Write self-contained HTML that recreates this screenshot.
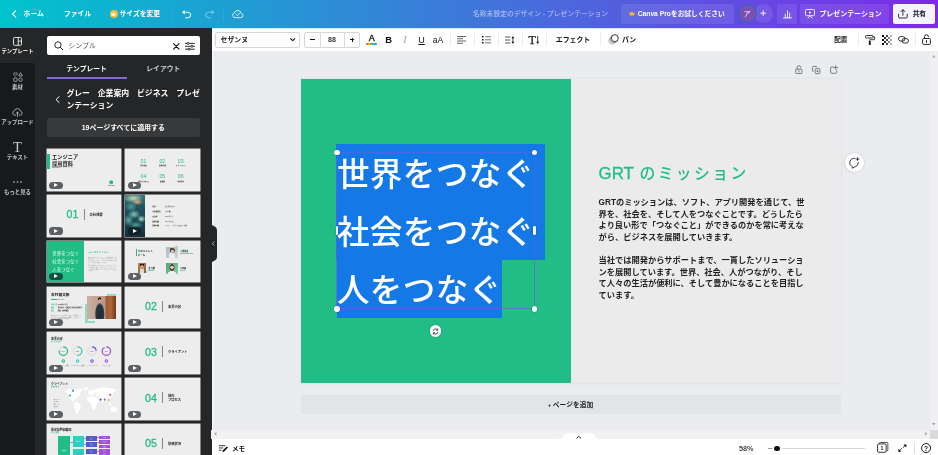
<!DOCTYPE html>
<html lang="ja">
<head>
<meta charset="utf-8">
<title>名称未設定のデザイン - プレゼンテーション</title>
<style>
*{box-sizing:border-box;margin:0;padding:0}
html,body{width:938px;height:455px;overflow:hidden;background:#ebecf0}
body{font-family:"Liberation Sans","Noto Sans CJK JP",sans-serif;position:relative;color:#0e1318;font-size:9px;line-height:1}
#top,#side,#panel,#tool,#canvas,#bottom{will-change:transform}
.abs{position:absolute}
.t{position:absolute;white-space:nowrap;line-height:1}
svg{position:absolute;overflow:visible}
/* top bar */
#top{position:absolute;left:0;top:0;width:938px;height:28px;background:linear-gradient(90deg,#00c4cc,#7d2ae8)}
#top .t{color:#fff;font-weight:700;font-size:6.8px}
/* side */
#side{position:absolute;left:0;top:28px;width:35px;height:427px;background:#18191b}
#side .act{position:absolute;left:0;top:0;width:35px;height:35px;background:#252627}
#side .lb{position:absolute;left:-10px;width:55px;text-align:center;color:#fff;font-size:6px;font-weight:700;white-space:nowrap;line-height:1}
#panel{position:absolute;left:35px;top:28px;width:176.4px;height:427px;background:#252627;overflow:hidden}
.th{position:absolute;width:74.4px;height:41.8px;background:#ededed;overflow:hidden;box-shadow:0 0 0 .45px #f4f4f4}
.pl{position:absolute;left:2.4px;top:32.6px;width:13.4px;height:7.2px;border-radius:3.6px;background:rgba(17,23,29,.66)}
.pl:after{content:"";position:absolute;left:5px;top:1.3px;border-left:4.2px solid #fff;border-top:2.3px solid transparent;border-bottom:2.3px solid transparent}
.hd{position:absolute;width:5.6px;height:5.6px;border-radius:50%;background:#fff;box-shadow:0 0 1.5px rgba(0,0,0,.45)}
.hp{position:absolute;width:2.4px;height:9px;border-radius:1.2px;background:#fff;box-shadow:0 0 1.5px rgba(0,0,0,.45)}
/* toolbar */
#tool{position:absolute;left:211px;top:28px;width:727px;height:23px;background:#fff}
#tool .dv{position:absolute;top:5px;width:1px;height:13px;background:#ebecee}
#bottom{position:absolute;left:211px;top:438px;width:727px;height:17px;background:#fff}
</style>
</head>
<body>
<!-- CANVAS -->
<div id="canvas" class="abs" style="left:211px;top:51px;width:719px;height:379px;background:#ebecf0;overflow:hidden">
<div class="abs" style="left:89.7px;top:27.8px;width:540.2px;height:303.8px;background:#ebebeb;box-shadow:0 0 3px rgba(40,45,60,.09)"></div>
<div class="abs" style="left:89.7px;top:27.8px;width:270.4px;height:303.8px;background:#22bd87"></div>
<div class="abs" style="left:0;top:0;width:.5px;height:379px;background:#252627"></div><div class="abs" style="left:.5px;top:0;width:2.4px;height:379px;background:linear-gradient(90deg,#f7f8fa,#eeeff2)"></div>
<!-- selection -->
<div class="abs" style="left:125.3px;top:92.8px;width:208.6px;height:116px;background:#1478e6"></div>
<div class="abs" style="left:126px;top:207px;width:164.8px;height:60.1px;background:#1478e6"></div>
<div class="abs" style="left:125px;top:101.4px;width:198.6px;height:156.3px;border:1px solid rgba(105,92,235,.68)"></div>
<div class="abs" id="big" style="left:125.9px;top:95.2px;font-size:32.6px;letter-spacing:.4px;line-height:58px;color:#fff;font-weight:500;white-space:nowrap">世界をつなぐ<br>社会をつなぐ<br>人をつなぐ</div>
<div class="hd" style="left:123px;top:98.8px"></div>
<div class="hd" style="left:320.8px;top:98.8px"></div>
<div class="hd" style="left:123px;top:255px"></div>
<div class="hd" style="left:320.8px;top:255px"></div>
<div class="hp" style="left:124.6px;top:174.5px"></div>
<div class="hp" style="left:322.4px;top:174.5px"></div>
<div class="abs" style="left:218.6px;top:274.4px;width:11.6px;height:11.6px;border-radius:50%;background:#fff;box-shadow:0 0 1.5px rgba(0,0,0,.3)"></div>
<svg style="left:220.9px;top:276.7px" width="7" height="7" viewBox="0 0 12 12"><path d="M2 5.2 A4 4 0 0 1 9.3 3.3 M10 6.8 A4 4 0 0 1 2.7 8.7" fill="none" stroke="#0e1318" stroke-width="1.3"/><path d="M9.8 1 V3.8 H7 M2.2 11 V8.2 H5" fill="none" stroke="#0e1318" stroke-width="1.3"/></svg>
<!-- right text -->
<div class="abs" style="left:387.5px;top:112px;font-size:17px;line-height:22px;color:#22bd87;white-space:nowrap;font-weight:400"><span style="font-size:16.9px;-webkit-text-stroke:.3px #22bd87">GRT</span><span style="font-size:15.8px;letter-spacing:2.4px;font-weight:500;margin-left:5.6px">のミッション</span></div>
<div class="abs" id="body" style="left:387.6px;top:146.3px;font-size:8.23px;line-height:11.55px;color:#1f2022;white-space:nowrap;font-weight:700">GRTのミッションは、ソフト、アプリ開発を通じて、世<br>界を、社会を、そして人をつなぐことです。どうしたら<br>より良い形で「つなぐこと」ができるのかを常に考えな<br>がら、ビジネスを展開していきます。<br><br>当社では開発からサポートまで、一貫したソリューショ<br>ンを展開しています。世界、社会、人がつながり、そし<br>て人々の生活が便利に、そして豊かになることを目指し<br>ています。</div>
<!-- comment button -->
<div class="abs" style="left:633.7px;top:102.3px;width:19px;height:19px;border-radius:50%;background:#fff;box-shadow:0 0 2.5px rgba(40,45,60,.22)"></div>
<svg style="left:637.9px;top:105.6px" width="11.5" height="11.5" viewBox="0 0 23 23"><path d="M11.79 2.99 A8.6 8.6 0 0 0 5.96 18.99 L7.16 22.59 L10.30 19.99 A8.6 8.6 0 0 0 18.59 11.10" fill="none" stroke="#0e1318" stroke-width="1.7" stroke-linecap="round" stroke-linejoin="round"/><path d="M17.2 1.4 V7 M14.4 4.2 H20" stroke="#0e1318" stroke-width="1.6" stroke-linecap="round"/></svg>
<!-- slide icons -->
<svg style="left:583.9px;top:14.1px" width="7.6" height="9" viewBox="0 0 15.2 18"><rect x="1.3" y="8.3" width="12.6" height="8.8" rx="1.6" fill="none" stroke="#66686d" stroke-width="1.7"/><path d="M4.2 8 V5.2 a3.6 3.6 0 0 1 7.2 -.4 V5.6" fill="none" stroke="#66686d" stroke-width="1.7" stroke-linecap="round"/><path d="M7.6 10.8 V14" stroke="#66686d" stroke-width="1.7" stroke-linecap="round"/></svg>
<svg style="left:600.9px;top:14.9px" width="8.4" height="8.2" viewBox="0 0 16.8 16.4"><rect x="6.2" y="5.2" width="9.6" height="10.2" rx="1.8" fill="none" stroke="#66686d" stroke-width="1.7"/><path d="M10.4 2.6 a1.7 1.7 0 0 0 -1.7 -1.7 H2.6 a1.7 1.7 0 0 0 -1.7 1.7 V9 a1.7 1.7 0 0 0 1.7 1.7 H3.6" fill="none" stroke="#66686d" stroke-width="1.7"/><path d="M11 8 V12.6 M8.7 10.3 H13.3" stroke="#66686d" stroke-width="1.5"/></svg>
<svg style="left:618.9px;top:14.2px" width="8.6" height="8.8" viewBox="0 0 17.2 17.6"><path d="M6.4 3.8 H3.2 a2 2 0 0 0 -2 2 V14.6 a2 2 0 0 0 2 2 H11.4 a2 2 0 0 0 2 -2 V11.4" fill="none" stroke="#66686d" stroke-width="1.7" stroke-linecap="round"/><path d="M11.4 1.2 V9 M7.5 5.1 H15.3" stroke="#66686d" stroke-width="1.7" stroke-linecap="round"/></svg>
<!-- add page -->
<div class="abs" style="left:89.7px;top:343.9px;width:540px;height:19px;border-radius:2px;background:#e3e4e8"></div>
<div class="abs" style="left:89.7px;top:351px;width:540px;text-align:center;font-size:6.77px;font-weight:700;color:#1f2022;white-space:nowrap"><span style="font-size:5.6px;position:relative;top:-.3px">+</span><span style="margin-left:1.4px">ページを追加</span></div>
</div>
<!-- TOP BAR -->
<div id="top">
<svg style="left:10.5px;top:10px" width="6" height="8" viewBox="0 0 6 8"><path d="M4.8 .8 L1.5 4 L4.8 7.2" fill="none" stroke="#fff" stroke-width="1.1" stroke-linecap="round" stroke-linejoin="round"/></svg>
<span class="t" style="left:23.5px;top:10.7px">ホーム</span>
<span class="t" style="left:64px;top:10.7px">ファイル</span>
<div class="abs" style="left:109.7px;top:9.9px;width:8.1px;height:8.1px;border-radius:50%;background:#fbb930"></div>
<svg style="left:111.3px;top:11.9px" width="4.9" height="4.1" viewBox="0 0 8 7"><path d="M0 1.5 L2.2 3.4 L4 0 L5.8 3.4 L8 1.5 L7.2 6.6 H.8 Z" fill="#fff"/></svg>
<span class="t" style="left:119.5px;top:10.7px">サイズを変更</span>
<div class="abs" style="left:172.2px;top:7px;width:1px;height:14px;background:rgba(255,255,255,.07)"></div>
<svg style="left:182.2px;top:9.5px" width="9.4" height="8.6" viewBox="0 0 18.8 17.2"><path d="M5 4.4 H11.6 a5.6 5.6 0 0 1 0 11.2 H7.2" fill="none" stroke="#fff" stroke-width="2" stroke-linecap="round"/><path d="M0 4.4 L5.6 0 V8.8 Z" fill="#fff"/></svg>
<svg style="left:204.6px;top:9.5px;opacity:.42" width="9.4" height="8.6" viewBox="0 0 18.8 17.2"><path d="M13.8 4.4 H7.2 a5.6 5.6 0 0 0 0 11.2 H11.6" fill="none" stroke="#fff" stroke-width="2" stroke-linecap="round"/><path d="M18.8 4.4 L13.2 0 V8.8 Z" fill="#fff"/></svg>
<div class="abs" style="left:223px;top:7px;width:1px;height:14px;background:rgba(255,255,255,.07)"></div>
<svg style="left:231.6px;top:9px" width="11.6" height="9.2" viewBox="0 0 23.2 18.4"><path d="M6.2 17.4 a5 5 0 0 1 -1.2 -9.8 a7 7 0 0 1 13.5 1.3 a4.3 4.3 0 0 1 -.7 8.5 Z" fill="none" stroke="#fff" stroke-opacity=".88" stroke-width="1.8" stroke-linejoin="round"/><path d="M8.2 10.8 L10.8 13.3 L15.4 8.2" fill="none" stroke="#fff" stroke-opacity=".88" stroke-width="1.8" stroke-linecap="round" stroke-linejoin="round"/></svg>
<span class="t" style="left:473px;top:10.7px;font-weight:400;font-size:6.8px;color:rgba(255,255,255,.62)">名称未設定のデザイン - プレゼンテーション</span>
<div class="abs" style="left:621px;top:4px;width:112.5px;height:19.5px;border-radius:2px;background:rgba(255,255,255,.09)"></div>
<svg style="left:628.7px;top:11.3px" width="5.8" height="4.8" viewBox="0 0 8 7"><path d="M0 1.5 L2.2 3.4 L4 0 L5.8 3.4 L8 1.5 L7.2 6.6 H.8 Z" fill="#fbb930"/></svg>
<span class="t" style="left:637.7px;top:10.7px;font-size:6.72px">Canva Proをお試しください</span>
<div class="abs" style="left:754.3px;top:4.3px;width:18.6px;height:18.6px;border-radius:50%;background:rgba(255,255,255,.1)"></div>
<div class="abs" style="left:738px;top:4px;width:19px;height:19px;border-radius:50%;background:#7b4fb6;border:1.3px solid #1b6fb5"></div>
<span class="t" style="left:743.6px;top:9.8px;font-weight:400;font-size:7.2px">ア</span>
<svg style="left:760.3px;top:10.4px" width="6.4" height="6.4" viewBox="0 0 8 8"><path d="M4 .5 V7.5 M.5 4 H7.5" stroke="#fff" stroke-width="1.15" fill="none"/></svg>
<div class="abs" style="left:777.3px;top:4px;width:19.5px;height:19.5px;border-radius:2px;background:rgba(255,255,255,.09)"></div>
<svg style="left:782.5px;top:9.6px" width="9" height="8.4" viewBox="0 0 18 17"><path d="M1 16 H17 M4.5 16 V8.5 M9 16 V1.5 M13.5 16 V6" fill="none" stroke="#fff" stroke-width="1.7" stroke-linecap="round"/></svg>
<div class="abs" style="left:800.2px;top:4px;width:88.8px;height:19.5px;border-radius:2px;background:rgba(255,255,255,.09)"></div>
<svg style="left:804.8px;top:9px" width="10" height="9.6" viewBox="0 0 20 19.2"><rect x="1" y="1" width="18" height="12.4" rx="2" fill="none" stroke="#fff" stroke-width="1.7"/><path d="M8.2 4.4 L12.6 7.2 L8.2 10 Z" fill="#fff"/><path d="M6 18.2 L10 13.6 L14 18.2" fill="none" stroke="#fff" stroke-width="1.7" stroke-linecap="round" stroke-linejoin="round"/></svg>
<span class="t" style="left:819.4px;top:10.7px;font-size:6.95px">プレゼンテーション</span>
<div class="abs" style="left:893.3px;top:4px;width:41.3px;height:19.5px;border-radius:2px;background:#f6f3fe"></div>
<svg style="left:898.4px;top:8.8px" width="9.8" height="9.6" viewBox="0 0 19.6 19.2"><path d="M1.2 10.4 V15.8 a2.2 2.2 0 0 0 2.2 2.2 H16.2 a2.2 2.2 0 0 0 2.2 -2.2 V10.4" fill="none" stroke="#0e1318" stroke-width="1.7" stroke-linecap="round" stroke-linejoin="round"/><path d="M9.8 12.6 V1.6 M5.8 5.4 L9.8 1.4 L13.8 5.4" fill="none" stroke="#0e1318" stroke-width="1.7" stroke-linecap="round" stroke-linejoin="round"/></svg>
<span class="t" style="left:912.7px;top:10.7px;font-size:6.7px;color:#0e1318">共有</span>
</div>
<!-- SIDE -->
<div id="side">
<div class="act"></div>
<div class="abs" style="left:0;top:35px;width:35px;height:6px;background:#252627"></div>
<div class="abs" style="left:0;top:35px;width:35px;height:392px;background:#18191b;border-top-right-radius:3px"></div>
<svg style="left:13.2px;top:8.8px" width="9" height="8.8" viewBox="0 0 18 17.6"><rect x="1" y="1" width="16" height="15.6" rx="2" fill="none" stroke="#fff" stroke-width="1.7"/><path d="M10.5 1 V16.6 M10.5 8.2 H17" stroke="#fff" stroke-width="1.7" fill="none"/></svg>
<span class="lb" style="top:20.8px;font-size:5.4px">テンプレート</span>
<svg style="left:12.8px;top:43.6px;opacity:.78" width="10" height="10" viewBox="0 0 20 20"><path d="M4.8 8 C1 5.2 .6 3.6 1.2 2.4 C2 1 3.8 1.2 4.8 2.6 C5.8 1.2 7.6 1 8.4 2.4 C9 3.6 8.6 5.2 4.8 8 Z" fill="none" stroke="#fff" stroke-width="1.4" stroke-linejoin="round"/><path d="M15 1.4 L18.8 8 H11.2 Z" fill="none" stroke="#fff" stroke-width="1.4" stroke-linejoin="round"/><rect x="1.5" y="12" width="6.6" height="6.6" rx="1" fill="none" stroke="#fff" stroke-width="1.4"/><circle cx="15" cy="15.3" r="3.5" fill="none" stroke="#fff" stroke-width="1.4"/></svg>
<span class="lb" style="top:57.3px;font-size:5.4px;color:#c8c9cb">素材</span>
<svg style="left:12.4px;top:79px;opacity:.78" width="11" height="10" viewBox="0 0 22 20"><path d="M7 16.5 H6 a4.7 4.7 0 0 1 -.7 -9.3 a6 6 0 0 1 11.6 1 a4.2 4.2 0 0 1 -.4 8.3 H15" fill="none" stroke="#fff" stroke-width="1.5" stroke-linecap="round" stroke-linejoin="round"/><path d="M11 19 V10.5 M8.2 13 L11 10.2 L13.8 13" fill="none" stroke="#fff" stroke-width="1.5" stroke-linecap="round" stroke-linejoin="round"/></svg>
<span class="lb" style="top:92.3px;font-size:5.4px;color:#c8c9cb">アップロード</span>
<span class="lb" style="top:112px;font-size:14.5px;font-weight:400;font-family:'Liberation Serif',serif;color:#c8c9cb">T</span>
<span class="lb" style="top:127.4px;font-size:5.4px;color:#c8c9cb">テキスト</span>
<svg style="left:13.3px;top:153px;opacity:.78" width="9" height="2" viewBox="0 0 18 4"><circle cx="2" cy="2" r="1.6" fill="#fff"/><circle cx="9" cy="2" r="1.6" fill="#fff"/><circle cx="16" cy="2" r="1.6" fill="#fff"/></svg>
<span class="lb" style="top:161.6px;font-size:5.4px;color:#c8c9cb">もっと見る</span>
</div>
<!-- PANEL -->
<div id="panel">
<div class="abs" style="left:12.1px;top:7.9px;width:152.5px;height:19.5px;background:#fff;border-radius:2px"></div>
<svg style="left:19px;top:13.2px" width="9.4" height="9.4" viewBox="0 0 19 19"><circle cx="8" cy="8" r="6.4" fill="none" stroke="#0e1318" stroke-width="1.8"/><path d="M12.8 12.8 L17.6 17.6" stroke="#0e1318" stroke-width="1.9" stroke-linecap="round"/></svg>
<span class="t" style="left:33.2px;top:14.2px;font-size:7px;color:#53555a">シンプル</span>
<svg style="left:138.3px;top:14.6px" width="6.6" height="6.6" viewBox="0 0 12 12"><path d="M1 1 L11 11 M11 1 L1 11" stroke="#0e1318" stroke-width="2.1" stroke-linecap="round"/></svg>
<svg style="left:150px;top:13.5px" width="9.8" height="8.6" viewBox="0 0 20 17"><path d="M0 2.6 H20 M0 8.5 H20 M0 14.4 H20" stroke="#0e1318" stroke-width="1.8"/><circle cx="6.5" cy="2.6" r="2.1" fill="#fff" stroke="#0e1318" stroke-width="1.6"/><circle cx="14" cy="8.5" r="2.1" fill="#fff" stroke="#0e1318" stroke-width="1.6"/><circle cx="8" cy="14.4" r="2.1" fill="#fff" stroke="#0e1318" stroke-width="1.6"/></svg>
<span class="t" style="left:31.3px;top:37.5px;font-size:6.8px;font-weight:700;color:#fff">テンプレート</span>
<span class="t" style="left:111.3px;top:37.5px;font-size:6.8px;font-weight:700;color:#cfd0d2">レイアウト</span>
<div class="abs" style="left:12px;top:49.2px;width:79.6px;height:1.8px;background:#8469d8"></div>
<svg style="left:19.5px;top:68.2px" width="5" height="7.2" viewBox="0 0 10 14.4"><path d="M8.4 1.2 L2 7.2 L8.4 13.2" fill="none" stroke="#fff" stroke-width="1.9" stroke-linecap="round" stroke-linejoin="round"/></svg>
<div class="abs" style="left:31.4px;top:59.2px;font-size:7.85px;font-weight:700;color:#fff;line-height:13px;white-space:nowrap">グレー　企業案内　ビジネス　プレゼ</div><div class="abs" style="left:31.4px;top:71.2px;font-size:7.85px;font-weight:700;color:#fff;line-height:13px;white-space:nowrap">ンテーション</div>
<div class="abs" style="left:12.1px;top:90.2px;width:152.5px;height:19.3px;background:#38393b;border-radius:2px"></div>
<div class="abs" style="left:12.1px;top:97.4px;width:152.5px;text-align:center;font-size:6.95px;font-weight:700;color:#fff;white-space:nowrap">19ページすべてに適用する</div>
<div class="th" style="left:11.9px;top:121.1px;"><div class="abs" style="left:0px;top:4.6px;width:3.6px;height:15.3px;background:#22bd87;opacity:1"></div><div class="abs" style="left:5.1px;top:5.1px;font-size:5.2px;line-height:6.8px;font-weight:700;color:#1b1c1e;white-space:nowrap;letter-spacing:.05px">エンジニア<br>採用資料</div><span class="t" style="left:5.1px;top:18.3px;font-size:1.7px;color:#444;font-weight:400;">2020/12/18</span><svg style="left:62.3px;top:30.8px" width="4.4" height="4.6" viewBox="0 0 9 9"><path d="M4.5 .3 L7 2 H8.4 V6.6 L4.5 8.8 L.6 6.6 V2 H2 Z" fill="#22bd87"/></svg><span class="t" style="left:59.6px;top:36.4px;font-size:1.6px;color:#333;font-weight:700;width:10px;text-align:center">GRT Inc.</span><div class="pl"></div></div>
<div class="th" style="left:90.3px;top:121.1px;"><span class="t" style="left:15.3px;top:9.5px;font-size:5.2px;color:#22bd87;font-weight:400;">01</span><span class="t" style="left:10.3px;top:16.0px;width:16.2px;text-align:center;font-size:1.7px;color:#333;font-weight:700">会社概要</span><span class="t" style="left:34.1px;top:9.5px;font-size:5.2px;color:#22bd87;font-weight:400;">02</span><span class="t" style="left:29.1px;top:16.0px;width:16.2px;text-align:center;font-size:1.7px;color:#333;font-weight:700">事業内容</span><span class="t" style="left:52.5px;top:9.5px;font-size:5.2px;color:#22bd87;font-weight:400;">03</span><span class="t" style="left:47.5px;top:16.0px;width:16.2px;text-align:center;font-size:1.7px;color:#333;font-weight:700">クライアント</span><span class="t" style="left:15.3px;top:25.0px;font-size:5.2px;color:#22bd87;font-weight:400;">04</span><span class="t" style="left:10.3px;top:31.6px;width:16.2px;text-align:center;font-size:1.7px;color:#333;font-weight:700">制作プロセス</span><span class="t" style="left:34.1px;top:25.0px;font-size:5.2px;color:#22bd87;font-weight:400;">05</span><span class="t" style="left:29.1px;top:31.6px;width:16.2px;text-align:center;font-size:1.7px;color:#333;font-weight:700">組織図</span><span class="t" style="left:52.5px;top:25.0px;font-size:5.2px;color:#22bd87;font-weight:400;">06</span><span class="t" style="left:47.5px;top:31.6px;width:16.2px;text-align:center;font-size:1.7px;color:#333;font-weight:700">財務状況</span><div class="pl"></div></div>
<div class="th" style="left:11.9px;top:166.9px;"><span class="t" style="left:19.7px;top:14.5px;font-size:10.6px;color:#22bd87;font-weight:400;-webkit-text-stroke:.3px #22bd87;">01</span><div class="abs" style="left:37.2px;top:14.2px;width:.9px;height:11.2px;background:#85878a;opacity:1"></div><span class="t" style="left:42.7px;top:19.2px;font-size:3.3px;color:#1b1c1e;font-weight:700;">会社概要</span><div class="pl"></div></div>
<div class="th" style="left:90.3px;top:166.9px;"><div class="abs" style="left:0;top:0;width:19.4px;height:41.8px;background:radial-gradient(ellipse 28% 7% at 62% 17%,#e6b070 0,rgba(230,176,112,0) 100%),radial-gradient(ellipse 50% 11% at 42% 8%,#c4dcb4 0,rgba(196,220,180,0) 100%),radial-gradient(ellipse 22% 9% at 82% 57%,#a8e0c8 0,rgba(168,224,200,0) 100%),radial-gradient(ellipse 32% 11% at 45% 46%,#86c6b4 0,rgba(134,198,180,0) 100%),radial-gradient(ellipse 26% 14% at 18% 60%,#62aaa2 0,rgba(98,170,162,0) 100%),radial-gradient(ellipse 36% 9% at 55% 71%,#549c94 0,rgba(84,156,148,0) 100%),radial-gradient(ellipse 30% 12% at 30% 28%,#4f9a98 0,rgba(79,154,152,0) 100%),linear-gradient(180deg,#3d747c 0,#215262 28%,#19424f 68%,#132f3b 100%)"></div><span class="t" style="left:27px;top:11.5px;font-size:1.7px;color:#222;font-weight:700;">社名</span><span class="t" style="left:39.7px;top:11.5px;font-size:1.7px;color:#444;font-weight:400;">株式会社GRT</span><span class="t" style="left:27px;top:16.25px;font-size:1.7px;color:#222;font-weight:700;">代表取締役</span><span class="t" style="left:39.7px;top:16.25px;font-size:1.7px;color:#444;font-weight:400;">古村 健</span><span class="t" style="left:27px;top:21.0px;font-size:1.7px;color:#222;font-weight:700;">設立年</span><span class="t" style="left:39.7px;top:21.0px;font-size:1.7px;color:#444;font-weight:400;">2005年4月</span><span class="t" style="left:27px;top:25.75px;font-size:1.7px;color:#222;font-weight:700;">従業員数</span><span class="t" style="left:39.7px;top:25.75px;font-size:1.7px;color:#444;font-weight:400;">1500名以上</span><span class="t" style="left:27px;top:30.5px;font-size:1.7px;color:#222;font-weight:700;">事業内容</span><span class="t" style="left:39.7px;top:30.5px;font-size:1.7px;color:#444;font-weight:400;">ソフト・アプリの企画・開発</span><div class="pl"></div></div>
<div class="th" style="left:11.9px;top:212.6px;"><div class="abs" style="left:0px;top:0px;width:37.2px;height:41.8px;background:#22bd87;opacity:1"></div><div class="abs" style="left:5.4px;top:9.8px;font-size:4.45px;line-height:8px;font-weight:400;color:#eafaf3;white-space:nowrap">世界をつなぐ<br>社会をつなぐ<br>人をつなぐ</div><span class="t" style="left:41.1px;top:11.9px;font-size:2.5px;color:#22bd87;font-weight:400;">GRT のミッション</span><div class="abs" style="left:41.1px;top:16.1px;width:29px;font-size:1.18px;line-height:1.7px;color:#8a8a8a;font-weight:400;white-space:nowrap">GRTのミッションは、ソフト、アプリ開発を通じて、世<br>界を、社会を、そして人をつなぐことです。どうしたら<br>より良い形で「つなぐこと」ができるのかを常に考えな<br>がら、ビジネスを展開していきます。<br><br>当社では開発からサポートまで、一貫したソリューショ<br>ンを展開しています。世界、社会、人がつながり、そし<br>て人々の生活が便利に、そして豊かになることを目指し<br>ています。</div><div class="pl"></div></div>
<div class="th" style="left:90.3px;top:212.6px;"><div class="abs" style="left:10.3px;top:8.9px;width:1.3px;height:6.4px;background:#22bd87;opacity:1"></div><div class="abs" style="left:12.5px;top:9.8px;font-size:2.5px;line-height:3.2px;font-weight:700;color:#1b1c1e;white-space:nowrap">マネジメント<br>チーム</div><div class="abs" style="left:50.2px;top:5.4px;width:2.6px;height:2.2px;background:#8fdcc0;opacity:1"></div><div class="abs" style="left:41.2px;top:6.3px;width:11.2px;height:11.2px;background:radial-gradient(circle at 52% 38%,#e8cdbd 0,#c9a898 17%,rgba(0,0,0,0) 19%),radial-gradient(ellipse at 50% 100%,#f1f1f3 0,#e4e6ea 38%,rgba(0,0,0,0) 40%),radial-gradient(circle at 52% 30%,#5a4236 0,#5a4236 25%,rgba(0,0,0,0) 27%),linear-gradient(135deg,#aeb9c4,#cfd6dc)"></div><span class="t" style="left:55.2px;top:10.5px;font-size:1.9px;color:#1b1c1e;font-weight:700;">小林美咲</span><div class="abs" style="left:55.2px;top:12.7px;width:12.6px;height:0.5px;background:#22bd87;opacity:0.6"></div><div class="abs" style="left:18.2px;top:30.6px;width:3.4px;height:2.2px;background:#8fdcc0;opacity:1"></div><div class="abs" style="left:12.3px;top:22.6px;width:8.9px;height:9.8px;background:radial-gradient(circle at 50% 40%,#d9a880 0,#c48f68 22%,rgba(0,0,0,0) 24%),radial-gradient(circle at 50% 28%,#2b1d16 0,#2b1d16 27%,rgba(0,0,0,0) 29%),radial-gradient(ellipse at 50% 105%,#e9e3dd 0,#d8d0c8 42%,rgba(0,0,0,0) 44%),linear-gradient(135deg,#b07f5c,#8d5f42)"></div><span class="t" style="left:23.2px;top:27px;font-size:1.9px;color:#1b1c1e;font-weight:700;">森 大輔</span><div class="abs" style="left:23.2px;top:29.2px;width:5.3px;height:0.5px;background:#22bd87;opacity:0.6"></div><div class="abs" style="left:40.4px;top:31.4px;width:2.9px;height:2.5px;background:#8fdcc0;opacity:1"></div><div class="abs" style="left:41.2px;top:22.6px;width:11.2px;height:10.6px;background:radial-gradient(circle at 50% 38%,#f0d8c8 0,#e0bea8 17%,rgba(0,0,0,0) 19%),radial-gradient(ellipse 40% 34% at 50% 106%,#f6f6f4 0,#ecece8 92%,rgba(0,0,0,0) 100%),radial-gradient(ellipse 23% 34% at 50% 42%,#5a4234 0,#60483a 85%,rgba(0,0,0,0) 100%),linear-gradient(135deg,#4aa878,#8bd0a8)"></div><span class="t" style="left:55.2px;top:27px;font-size:1.9px;color:#1b1c1e;font-weight:700;">山田麗</span><div class="abs" style="left:55.2px;top:29.2px;width:4.6px;height:0.5px;background:#22bd87;opacity:0.6"></div><div class="pl"></div></div>
<div class="th" style="left:11.9px;top:258.5px;"><span class="t" style="left:4.2px;top:7.5px;font-size:3.7px;color:#1b1c1e;font-weight:700;">古村健太郎</span><div class="abs" style="left:4.2px;top:12.5px;width:5.8px;height:0.7px;background:#22bd87;opacity:1"></div><div class="abs" style="left:10px;top:12.7px;width:7.6px;height:0.3px;background:#bbb;opacity:1"></div><span class="t" style="left:4.2px;top:17.9px;font-size:1.55px;color:#22bd87;font-weight:700;">生年月日</span><span class="t" style="left:10.8px;top:17.9px;font-size:1.55px;color:#222;font-weight:700;">1975年4月1日</span><span class="t" style="left:4.2px;top:20.5px;font-size:1.55px;color:#22bd87;font-weight:700;">経歴</span><span class="t" style="left:10.8px;top:20.5px;font-size:1.55px;color:#222;font-weight:700;">東京大学、情報理工学系研究科修了</span><span class="t" style="left:4.2px;top:23.1px;font-size:1.55px;color:#22bd87;font-weight:700;">趣味</span><span class="t" style="left:10.8px;top:23.1px;font-size:1.55px;color:#222;font-weight:700;">読書、映画鑑賞</span><div class="abs" style="left:4.2px;top:28.4px;font-size:1.25px;line-height:1.75px;color:#666;white-space:nowrap">私たちは人と人、人と社会をつなぐことを使命として、<br>ソフトウェアの力で世界をより便利に、より豊かに<br>していくことを目指しています。</div><div class="abs" style="left:60.3px;top:7.6px;width:8.4px;height:3.4px;background:#8fdcc0;opacity:1"></div><div class="abs" style="left:38.6px;top:17px;width:3px;height:19.6px;background:#8fdcc0;opacity:1"></div><div class="abs" style="left:38.6px;top:34px;width:9.4px;height:2.6px;background:#8fdcc0;opacity:1"></div><div class="abs" style="left:40.3px;top:9.1px;width:29.3px;height:23.4px;background:radial-gradient(ellipse at 44% 21%,#d9ad8f 0,#c99878 5.5%,rgba(0,0,0,0) 7%),radial-gradient(ellipse at 44% 14%,#2a1f1a 0,#2a1f1a 6%,rgba(0,0,0,0) 7.5%),radial-gradient(ellipse 17% 50% at 44% 78%,#222c38 0,#2a3542 80%,rgba(0,0,0,0) 100%),linear-gradient(90deg,#cbb0a2 0,#c4a595 30%,#b99684 62%,#9c5a33 66%,#b0673a 82%,#6b3a20 100%)"></div><div class="pl"></div></div>
<div class="th" style="left:90.3px;top:258.5px;"><span class="t" style="left:19.7px;top:14.5px;font-size:10.6px;color:#22bd87;font-weight:400;-webkit-text-stroke:.3px #22bd87;">02</span><div class="abs" style="left:37.2px;top:14.2px;width:.9px;height:11.2px;background:#85878a;opacity:1"></div><span class="t" style="left:42.7px;top:19.2px;font-size:3.3px;color:#1b1c1e;font-weight:700;">事業内容</span><div class="pl"></div></div>
<div class="th" style="left:11.9px;top:304.1px;"><span class="t" style="left:4.2px;top:5.7px;font-size:2.9px;color:#1b1c1e;font-weight:700;">事業内容</span><span class="t" style="left:4.2px;top:9.2px;font-size:1.6px;color:#22bd87;font-weight:700;">サービス比率</span><svg style="left:0;top:0" width="74.4" height="41.8" viewBox="0 0 74.4 41.8"><circle cx="16.30" cy="19.2" r="4.2" fill="none" stroke="#c9cacc" stroke-width=".55"/><circle cx="16.30" cy="19.2" r="4.2" fill="none" stroke="#22bd87" stroke-width="1.25" stroke-dasharray="19.79 26.39" transform="rotate(-90 16.30 19.2)"/><text x="16.30" y="19.8" font-size="1.7" text-anchor="middle" fill="#555">27%</text><circle cx="16.30" cy="29" r="1.75" fill="#22bd87"/><circle cx="16.30" cy="29" r=".7" fill="#e8f3ef"/><text x="16.30" y="33.6" font-size="1.35" text-anchor="middle" fill="#555">ソフトウェア開発</text><circle cx="30.65" cy="19.2" r="4.2" fill="none" stroke="#c9cacc" stroke-width=".55"/><circle cx="30.65" cy="19.2" r="4.2" fill="none" stroke="#2ecfc0" stroke-width="1.25" stroke-dasharray="13.19 26.39" transform="rotate(-90 30.65 19.2)"/><text x="30.65" y="19.8" font-size="1.7" text-anchor="middle" fill="#555">23%</text><circle cx="30.65" cy="29" r="1.75" fill="#2ecfc0"/><circle cx="30.65" cy="29" r=".7" fill="#e8f3ef"/><text x="30.65" y="33.6" font-size="1.35" text-anchor="middle" fill="#555">アプリケーション開発</text><circle cx="45.00" cy="19.2" r="4.2" fill="none" stroke="#c9cacc" stroke-width=".55"/><circle cx="45.00" cy="19.2" r="4.2" fill="none" stroke="#5b5bd6" stroke-width="1.25" stroke-dasharray="5.81 26.39" transform="rotate(-90 45.00 19.2)"/><text x="45.00" y="19.8" font-size="1.7" text-anchor="middle" fill="#555">15%</text><circle cx="45.00" cy="29" r="1.75" fill="#5b5bd6"/><circle cx="45.00" cy="29" r=".7" fill="#e8f3ef"/><text x="45.00" y="33.6" font-size="1.35" text-anchor="middle" fill="#555">コンサルティング</text><circle cx="59.35" cy="19.2" r="4.2" fill="none" stroke="#c9cacc" stroke-width=".55"/><circle cx="59.35" cy="19.2" r="4.2" fill="none" stroke="#a24ddb" stroke-width="1.25" stroke-dasharray="23.75 26.39" transform="rotate(-90 59.35 19.2)"/><text x="59.35" y="19.8" font-size="1.7" text-anchor="middle" fill="#555">35%</text><circle cx="59.35" cy="29" r="1.75" fill="#a24ddb"/><circle cx="59.35" cy="29" r=".7" fill="#e8f3ef"/><text x="59.35" y="33.6" font-size="1.35" text-anchor="middle" fill="#555">システム運用</text></svg><div class="pl"></div></div>
<div class="th" style="left:90.3px;top:304.1px;"><span class="t" style="left:19.7px;top:14.5px;font-size:10.6px;color:#22bd87;font-weight:400;-webkit-text-stroke:.3px #22bd87;">03</span><div class="abs" style="left:37.2px;top:14.2px;width:.9px;height:11.2px;background:#85878a;opacity:1"></div><span class="t" style="left:42.7px;top:19.2px;font-size:3.3px;color:#1b1c1e;font-weight:700;">クライアント</span><div class="pl"></div></div>
<div class="th" style="left:11.9px;top:350.0px;"><span class="t" style="left:4.2px;top:4.9px;font-size:2.9px;color:#1b1c1e;font-weight:700;">クライアント</span><span class="t" style="left:4.2px;top:8.3px;font-size:1.6px;color:#22bd87;font-weight:700;">世界の拠点</span><svg style="left:0;top:0" width="74.4" height="41.8" viewBox="0 0 74.4 41.8"><g fill="#fff">
<path d="M18 13.2 L21 11.6 L25.5 11 L30 11.4 L33.5 10.6 L36.5 11.6 L34.5 13.6 L32.5 14.6 L33.6 16.6 L31.2 18.4 L29.8 20.6 L27.6 21.8 L26.8 24 L25.4 23.6 L24.6 21.6 L22.6 20.4 L21.4 18 L20.6 15.4 L18.6 14.6 Z"/>
<path d="M36.8 9.6 L40.4 9 L41.6 10.6 L39.4 12.6 L37.4 12 Z"/>
<path d="M27.6 24.4 L30.6 24 L33.2 26 L33.8 29 L32 32.4 L30.4 35.6 L29.2 36.4 L28.6 33 L27.4 29.4 L26.8 26.4 Z"/>
<path d="M41 13.6 L43 12 L46 11.4 L47.6 12.6 L46.4 14.4 L48 15.6 L46 17 L43.6 17.4 L41.6 17.6 L41.4 15.6 Z"/>
<path d="M40.6 19 L44 18.2 L48 18.6 L50.4 20 L51.4 23 L50 26.4 L48.4 30.4 L46.4 32.6 L44.8 30 L44.2 26 L41.6 24 L40 21.4 Z"/>
<path d="M47.6 11.6 L52 10 L58 9.6 L64 10.2 L69 11.4 L68.4 13.6 L65.6 14.6 L66.4 17 L64 19.4 L62.4 22 L60.6 23.6 L59 21.6 L57 22.6 L55.6 25.6 L53.6 22.6 L51.6 19.6 L49.6 18 L48.6 15.4 L47.4 13.6 Z"/>
<path d="M60.6 25.6 L63 25.2 L65 27 L62.6 27.6 Z M64 29.6 L67.6 28.6 L70 30.6 L69.6 33.6 L66.6 34.4 L63.8 32.6 Z M70.6 34.6 L71.6 36 L70.6 36.6 Z"/></g>
<g><rect x="25.2" y="11.6" width="1.7" height="2.1" rx=".5" fill="#3b7fd9"/><rect x="22.1" y="16.4" width="1.7" height="2.1" rx=".5" fill="#22bd87"/><rect x="62.4" y="15.8" width="1.7" height="2.1" rx=".5" fill="#f0605a"/><rect x="52.8" y="20.4" width="1.7" height="2.1" rx=".5" fill="#2d4f9e"/><rect x="56.8" y="20.4" width="1.7" height="2.1" rx=".5" fill="#9b59d0"/><rect x="60.7" y="20.9" width="1.7" height="2.1" rx=".5" fill="#f2b92e"/></g>
<g font-size="1.3" fill="#555"><text x="8.2" y="21.9">アメリカ</text><text x="8.2" y="24.3">日本</text><text x="8.2" y="26.7">インド</text><text x="8.2" y="29.1">中国</text></g>
<g><rect x="6.8" y="21" width=".9" height=".9" fill="#3b7fd9"/><rect x="6.8" y="23.4" width=".9" height=".9" fill="#f0605a"/><rect x="6.8" y="25.8" width=".9" height=".9" fill="#2d4f9e"/><rect x="6.8" y="28.2" width=".9" height=".9" fill="#9b59d0"/></g></svg><div class="pl"></div></div>
<div class="th" style="left:90.3px;top:350.0px;"><span class="t" style="left:19.7px;top:14.5px;font-size:10.6px;color:#22bd87;font-weight:400;-webkit-text-stroke:.3px #22bd87;">04</span><div class="abs" style="left:37.2px;top:14.2px;width:.9px;height:11.2px;background:#85878a;opacity:1"></div><div class="abs" style="left:42.7px;top:17px;font-size:3.3px;line-height:3.9px;font-weight:700;color:#1b1c1e;white-space:nowrap">制作<br>プロセス</div><div class="pl"></div></div>
<div class="th" style="left:11.9px;top:395.5px;"><span class="t" style="left:4.2px;top:5.1px;font-size:2.9px;color:#1b1c1e;font-weight:700;">開発部門組織図</span><span class="t" style="left:4.2px;top:8.3px;font-size:1.6px;color:#22bd87;font-weight:700;">チーム構成</span><div class="abs" style="left:11.6px;top:12px;width:11.6px;height:30px;background:#22bd87;color:rgba(255,255,255,.75);font-size:1.5px;line-height:30px;text-align:center;white-space:nowrap;overflow:hidden">開発部</div><div class="abs" style="left:25.8px;top:12px;width:10.9px;height:11.9px;background:#2ecfc0;color:rgba(255,255,255,.75);font-size:1.5px;line-height:11.9px;text-align:center;white-space:nowrap;overflow:hidden">第一課</div><div class="abs" style="left:25.8px;top:25.1px;width:10.9px;height:17px;background:#2ecfc0;color:rgba(255,255,255,.75);font-size:1.5px;line-height:17px;text-align:center;white-space:nowrap;overflow:hidden">第二課</div><div class="abs" style="left:38.9px;top:12px;width:11.1px;height:5.1px;background:#5458c9;color:rgba(255,255,255,.75);font-size:1.5px;line-height:5.1px;text-align:center;white-space:nowrap;overflow:hidden">設計</div><div class="abs" style="left:38.9px;top:18.3px;width:11.1px;height:5.1px;background:#5458c9;color:rgba(255,255,255,.75);font-size:1.5px;line-height:5.1px;text-align:center;white-space:nowrap;overflow:hidden">実装</div><div class="abs" style="left:38.9px;top:25.1px;width:11.1px;height:5.1px;background:#5458c9;color:rgba(255,255,255,.75);font-size:1.5px;line-height:5.1px;text-align:center;white-space:nowrap;overflow:hidden">検証</div><div class="abs" style="left:52.2px;top:12px;width:10.9px;height:3.5px;background:#a24ddb;color:rgba(255,255,255,.75);font-size:1.5px;line-height:3.5px;text-align:center;white-space:nowrap;overflow:hidden">企画</div><div class="abs" style="left:52.2px;top:16.7px;width:10.9px;height:3.5px;background:#a24ddb;color:rgba(255,255,255,.75);font-size:1.5px;line-height:3.5px;text-align:center;white-space:nowrap;overflow:hidden">UI設計</div><div class="abs" style="left:52.2px;top:21.4px;width:10.9px;height:3.5px;background:#a24ddb;color:rgba(255,255,255,.75);font-size:1.5px;line-height:3.5px;text-align:center;white-space:nowrap;overflow:hidden">開発</div><div class="abs" style="left:52.2px;top:25.6px;width:10.9px;height:3.5px;background:#a24ddb;color:rgba(255,255,255,.75);font-size:1.5px;line-height:3.5px;text-align:center;white-space:nowrap;overflow:hidden">運用</div><div class="abs" style="left:52.2px;top:29.9px;width:10.9px;height:3.5px;background:#a24ddb;color:rgba(255,255,255,.75);font-size:1.5px;line-height:3.5px;text-align:center;white-space:nowrap;overflow:hidden">保守</div><div class="abs" style="left:23.2px;top:18px;width:2.6px;height:0.3px;background:#999;opacity:1"></div><div class="abs" style="left:36.7px;top:14.5px;width:2.2px;height:0.3px;background:#999;opacity:1"></div><div class="abs" style="left:36.7px;top:20.8px;width:2.2px;height:0.3px;background:#999;opacity:1"></div><div class="abs" style="left:50px;top:13.7px;width:2.2px;height:0.3px;background:#999;opacity:1"></div><div class="abs" style="left:50px;top:18.4px;width:2.2px;height:0.3px;background:#999;opacity:1"></div><div class="abs" style="left:50px;top:27.3px;width:2.2px;height:0.3px;background:#999;opacity:1"></div><div class="pl"></div></div>
<div class="th" style="left:90.3px;top:395.5px;"><span class="t" style="left:19.7px;top:14.5px;font-size:10.6px;color:#22bd87;font-weight:400;-webkit-text-stroke:.3px #22bd87;">05</span><div class="abs" style="left:37.2px;top:14.2px;width:.9px;height:11.2px;background:#85878a;opacity:1"></div><span class="t" style="left:42.7px;top:19.2px;font-size:3.3px;color:#1b1c1e;font-weight:700;">財務状況</span><div class="pl"></div></div>

</div>
<!-- TOOLBAR -->
<div id="tool"><div class="abs" style="left:0;top:0;width:727px;height:.8px;background:linear-gradient(90deg,rgba(0,196,204,.22),rgba(125,42,232,.16))"></div><div class="abs" style="left:0;top:0;width:.5px;height:23px;background:#252627"></div>
<div class="abs" style="left:4.4px;top:4.2px;width:85px;height:15.4px;border:1px solid #d4d6d9;border-radius:2px"></div>
<span class="t" style="left:9.6px;top:9.3px;font-size:6.9px;font-weight:700;color:#1d2026">セザンヌ</span>
<svg style="left:79.2px;top:10.4px" width="5.4" height="3.2" viewBox="0 0 10 6"><path d="M1 1 L5 5 L9 1" fill="none" stroke="#0e1318" stroke-width="2" stroke-linecap="round" stroke-linejoin="round"/></svg>
<div class="abs" style="left:93.3px;top:4.2px;width:55.4px;height:15.4px;border:1px solid #d4d6d9;border-radius:2px"></div>
<div class="abs" style="left:108.7px;top:4.2px;width:1px;height:15.4px;background:#d8dadd"></div>
<div class="abs" style="left:132.5px;top:4.2px;width:1px;height:15.4px;background:#d8dadd"></div>
<div class="abs" style="left:99.4px;top:11.3px;width:4.2px;height:1.1px;background:#0e1318"></div>
<span class="t" style="left:117.1px;top:7.5px;font-size:7px;font-weight:700;color:#30333a">88</span>
<div class="abs" style="left:139.3px;top:11.3px;width:3.6px;height:1.1px;background:#0e1318"></div>
<div class="abs" style="left:140.55px;top:10.05px;width:1.1px;height:3.6px;background:#0e1318"></div>
<span class="t" style="left:157.7px;top:6.3px;font-size:9px;-webkit-text-stroke:.35px #0e1318">A</span>
<div class="abs" style="left:155.4px;top:14.8px;width:10.8px;height:2.2px;border-radius:1.1px;background:linear-gradient(90deg,#f5333f 0%,#ffb400 28%,#35c759 52%,#22b8e6 74%,#3a6bf0 100%)"></div>
<span class="t" style="left:174.3px;top:6.9px;font-size:9.4px;font-weight:700">B</span>
<span class="t" style="left:192.2px;top:6.8px;font-size:10px;font-style:italic;font-family:'Liberation Serif',serif;color:#a3a5a9">I</span>
<span class="t" style="left:207.3px;top:7.5px;font-size:9px;text-decoration:underline">U</span>
<span class="t" style="left:221.7px;top:7.7px;font-size:8.6px">aA</span>
<div class="dv" style="left:239.3px"></div>
<svg style="left:246.2px;top:8px" width="9.6" height="8" viewBox="0 0 19 16"><path d="M0 1 H18 M0 5.5 H12 M0 10 H18 M0 14.5 H12" stroke="#2a2d33" stroke-width="1.5" fill="none"/></svg>
<div class="dv" style="left:262.7px"></div>
<svg style="left:270.6px;top:8.4px" width="9" height="7.6" viewBox="0 0 18 15.2"><path d="M0 0 H3 V3 H0 Z M0 6.1 H3 V9.1 H0 Z M0 12.2 H3 V15.2 H0 Z" fill="#0e1318"/><path d="M6.4 1.5 H18 M6.4 7.6 H18 M6.4 13.7 H18" stroke="#3a3d42" stroke-width="1.5" fill="none"/></svg>
<div class="dv" style="left:286.7px"></div>
<svg style="left:294.4px;top:8.2px" width="10" height="8" viewBox="0 0 20 16"><path d="M0 2 H10.5 M0 8 H10.5 M0 14 H10.5" stroke="#2a2d33" stroke-width="1.6" fill="none"/><path d="M15.8 2.4 V13.6" stroke="#0e1318" stroke-width="1.6" fill="none"/><path d="M12.8 4.4 L15.8 .6 L18.8 4.4 Z M12.8 11.6 L15.8 15.4 L18.8 11.6 Z" fill="#0e1318"/></svg>
<div class="dv" style="left:310.8px"></div>
<span class="t" style="left:317.4px;top:5.6px;font-size:12px;font-family:'Liberation Serif',serif;-webkit-text-stroke:.25px #0e1318">T</span><svg style="left:325px;top:8.4px" width="3.4" height="8.2" viewBox="0 0 6.8 16.4"><path d="M3.4 0 V13" stroke="#0e1318" stroke-width="1.6" fill="none"/><path d="M.4 11.6 L3.4 16 L6.4 11.6 Z" fill="#0e1318"/></svg>
<div class="dv" style="left:334.6px"></div>
<span class="t" style="left:344.8px;top:8.9px;font-size:6.9px;font-weight:700">エフェクト</span>
<div class="dv" style="left:388.7px"></div>
<svg style="left:395.6px;top:5.6px" width="12" height="11" viewBox="0 0 24 22"><circle cx="9.4" cy="14.4" r="6.6" fill="none" stroke="#b5b7bb" stroke-width="1"/><circle cx="11.4" cy="12.4" r="6.8" fill="#fff" stroke="#86888d" stroke-width="1.1"/><circle cx="13.4" cy="10.4" r="7" fill="#fff" stroke="#55585d" stroke-width="1.2"/><circle cx="15.6" cy="8.4" r="7" fill="#fff" stroke="#0e1318" stroke-width="1.7"/></svg>
<span class="t" style="left:411px;top:8.9px;font-size:6.9px;font-weight:700">パン</span>
<span class="t" style="left:623.2px;top:9px;font-size:6.6px;font-weight:700">配置</span>
<div class="dv" style="left:646.7px"></div>
<svg style="left:653.6px;top:6.8px" width="10" height="10.4" viewBox="0 0 20 21"><rect x="1" y="1" width="15" height="5" rx="1.5" fill="none" stroke="#0e1318" stroke-width="1.7"/><path d="M16 3.5 H19 V9.5 H9.5 V12" fill="none" stroke="#0e1318" stroke-width="1.6" stroke-linejoin="round"/><rect x="7.6" y="12" width="3.8" height="8" rx="1" fill="#0e1318"/></svg>
<svg style="left:670.5px;top:6.8px" width="10" height="10" viewBox="0 0 10 10"><g fill="#0e1318"><rect x="0" y="0" width="2" height="2"/><rect x="4" y="0" width="2" height="2" opacity=".75"/><rect x="8" y="0" width="2" height="2" opacity=".35"/><rect x="2" y="2" width="2" height="2" opacity=".9"/><rect x="6" y="2" width="2" height="2" opacity=".5"/><rect x="0" y="4" width="2" height="2"/><rect x="4" y="4" width="2" height="2" opacity=".75"/><rect x="8" y="4" width="2" height="2" opacity=".35"/><rect x="2" y="6" width="2" height="2" opacity=".9"/><rect x="6" y="6" width="2" height="2" opacity=".5"/><rect x="0" y="8" width="2" height="2"/><rect x="4" y="8" width="2" height="2" opacity=".75"/><rect x="8" y="8" width="2" height="2" opacity=".35"/></g></svg>
<svg style="left:686.8px;top:8.2px" width="11" height="7.6" viewBox="0 0 22 15"><rect x="1" y="1" width="13" height="9" rx="4.5" fill="none" stroke="#0e1318" stroke-width="1.7"/><rect x="8" y="5" width="13" height="9" rx="4.5" fill="none" stroke="#0e1318" stroke-width="1.7"/></svg>
<div class="dv" style="left:703.8px"></div>
<svg style="left:711.3px;top:6px" width="9" height="11" viewBox="0 0 18 22"><rect x="1.2" y="9" width="15.6" height="11.8" rx="2" fill="none" stroke="#0e1318" stroke-width="1.8"/><path d="M5 9 V5.5 a4 4 0 0 1 8 0" fill="none" stroke="#0e1318" stroke-width="1.8" stroke-linecap="round"/><path d="M9 13 V17" stroke="#0e1318" stroke-width="1.8" stroke-linecap="round"/></svg>
</div>
<!-- BOTTOM -->
<div id="bottom"><div class="abs" style="left:0;top:0;width:.5px;height:17px;background:#252627"></div>
<svg style="left:7.8px;top:6.8px" width="9.4" height="7.6" viewBox="0 0 19 15"><path d="M0 1.2 H13 M0 5.8 H8.5 M0 10.4 H5" stroke="#0e1318" stroke-width="1.7" fill="none"/><path d="M7 14.4 L8 10.6 L15.6 2.6 L18.2 5 L10.6 13.2 Z" fill="#0e1318"/></svg>
<span class="t" style="left:20.9px;top:7.6px;font-size:6.6px;font-weight:700;color:#0e1318">メモ</span>
<span class="t" style="left:528px;top:7px;font-size:7.25px;font-weight:700;color:#454952">58%</span>
<div class="abs" style="left:556.8px;top:10px;width:97.2px;height:.8px;background:#d6d8db"></div>
<div class="abs" style="left:556.8px;top:10px;width:8px;height:.8px;background:#9a9ca1"></div>
<div class="abs" style="left:563.1px;top:7.5px;width:5.9px;height:5.9px;border-radius:50%;background:#0e1318;box-shadow:0 0 0 1.6px #fff"></div>
<svg style="left:666.4px;top:4.4px" width="11.4" height="10.8" viewBox="0 0 23 22"><path d="M5 3.5 V2.5 a1.5 1.5 0 0 1 1.5 -1.5 H20 a2 2 0 0 1 2 2 V16.5 a1.5 1.5 0 0 1 -1.5 1.5 H19.5" fill="none" stroke="#0e1318" stroke-width="1.5"/><rect x="1" y="4" width="17.5" height="17" rx="2.4" fill="#fff" stroke="#0e1318" stroke-width="1.7"/><text x="9.8" y="16.6" font-size="10.5" font-weight="700" text-anchor="middle" fill="#0e1318" font-family="Liberation Sans, sans-serif">1</text></svg>
<svg style="left:687.2px;top:6.2px" width="8.8" height="8.2" viewBox="0 0 17.6 16.4"><path d="M10.4 7 L15 2.6 M2.6 13.8 L7.2 9.4" stroke="#0e1318" stroke-width="1.7" stroke-linecap="round"/><path d="M10.8 .8 H16.8 V6.8 Z M.8 9.6 V15.6 H6.8 Z" fill="#0e1318"/></svg>
<div class="abs" style="left:703.3px;top:5px;width:.8px;height:10.5px;background:#dcdde0"></div>
<svg style="left:710.4px;top:5.3px" width="10.2" height="10.2" viewBox="0 0 20 20"><circle cx="10" cy="10" r="8.9" fill="none" stroke="#0e1318" stroke-width="1.9"/><text x="10" y="14.8" font-size="13" font-weight="700" text-anchor="middle" fill="#0e1318" font-family="Liberation Sans, sans-serif">?</text></svg>
</div>
<!-- scrollbars -->
<div class="abs" style="left:211px;top:429.8px;width:719px;height:8.9px;background:#f1f1f2"></div>
<div class="abs" style="left:930px;top:51px;width:8px;height:379px;background:#f0f0f2"></div>
<div class="abs" style="left:930px;top:429.8px;width:8px;height:8.9px;background:#d9dadc"></div>
<svg style="left:214.4px;top:432.4px" width="2.4" height="3.6" viewBox="0 0 4 6"><path d="M4 0 V6 L0 3 Z" fill="#a6a7aa"/></svg>
<svg style="left:924.6px;top:432.4px" width="2.4" height="3.6" viewBox="0 0 4 6"><path d="M0 0 V6 L4 3 Z" fill="#a6a7aa"/></svg>
<svg style="left:932.2px;top:55.2px" width="3.6" height="2.4" viewBox="0 0 6 4"><path d="M0 4 H6 L3 0 Z" fill="#a6a7aa"/></svg>
<svg style="left:932.2px;top:423.4px" width="3.6" height="2.4" viewBox="0 0 6 4"><path d="M0 0 H6 L3 4 Z" fill="#a6a7aa"/></svg>
<!-- notes tab -->
<svg style="left:559px;top:432.6px" width="40.4" height="6" viewBox="0 0 40.4 6"><path d="M0 6 C3.5 6 4.5 .2 8 .2 H32.4 C35.9 .2 36.9 6 40.4 6 Z" fill="#fff"/><path d="M17.8 5.2 L19.8 3.3 L21.8 5.2" fill="none" stroke="#2a2d33" stroke-width="1" stroke-linecap="round" stroke-linejoin="round"/></svg>
<!-- panel edge + collapse handle -->

<svg style="left:211px;top:222.5px" width="7" height="41" viewBox="0 0 7 41"><path d="M0 0 C.4 3.4 6 2.8 6 7 V34 C6 38.2 .4 37.6 0 41 Z" fill="#252627"/><path d="M2.9 18.9 L1.4 20.6 L2.9 22.3" fill="none" stroke="#c9cacc" stroke-width=".8" stroke-linecap="round" stroke-linejoin="round"/></svg>

</body>
</html>
